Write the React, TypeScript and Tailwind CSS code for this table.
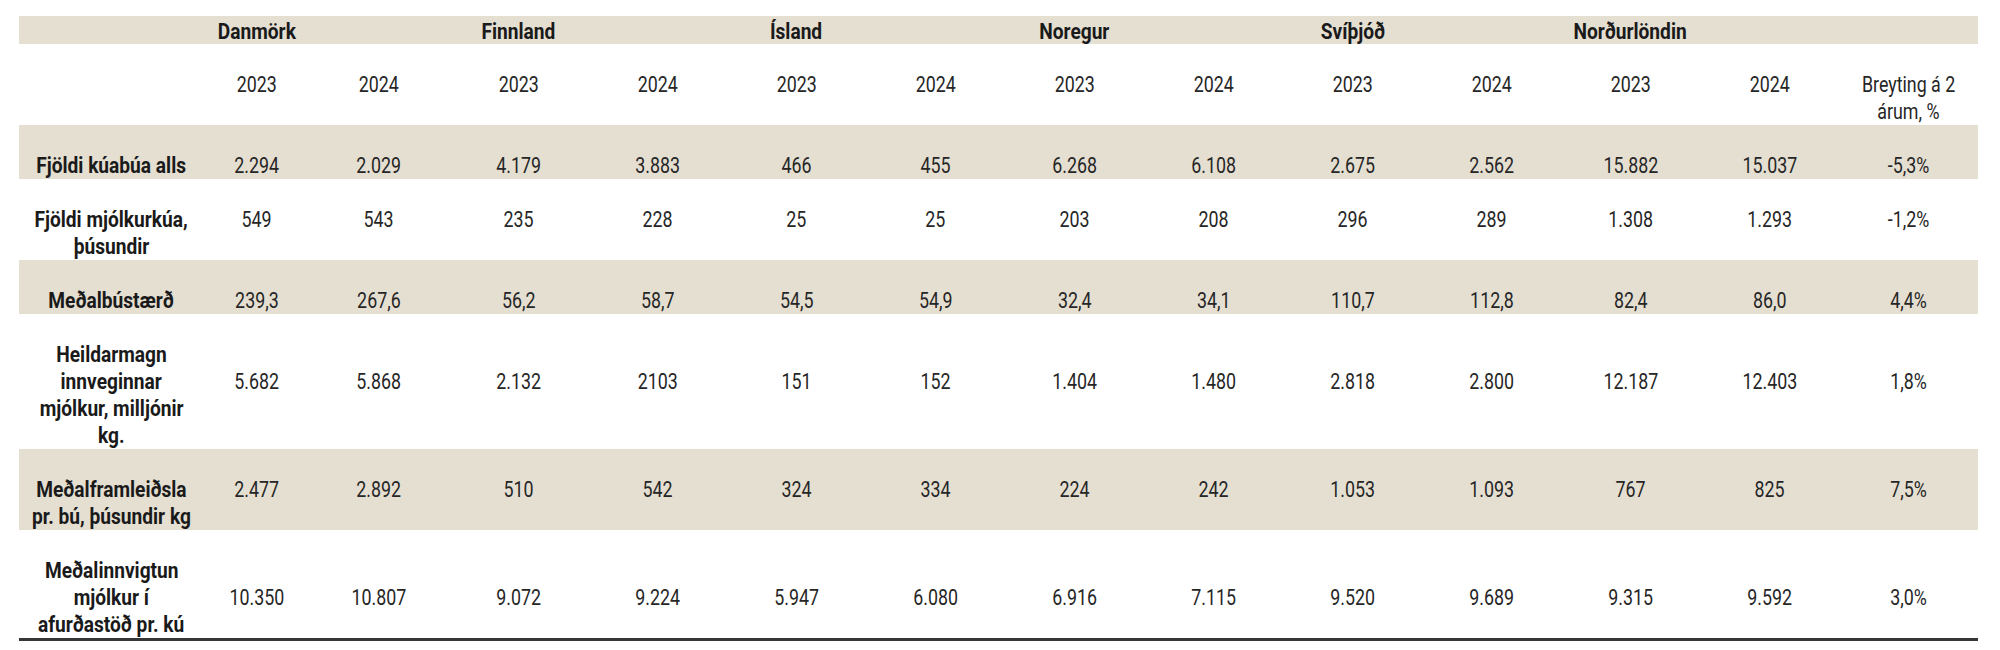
const font = { fontFamily: '"Liberation Sans Narrow", "Roboto", sans-serif' };

const countries = ['Danmörk', 'Finnland', 'Ísland', 'Noregur', 'Svíþjóð', 'Norðurlöndin'];

type Row = {
  label: string[];
  values: string[];
  shaded: boolean;
  deep?: boolean;
};

const rows: Row[] = [
  {
    label: ['Fjöldi kúabúa alls'],
    values: ['2.294', '2.029', '4.179', '3.883', '466', '455', '6.268', '6.108', '2.675', '2.562', '15.882', '15.037', '-5,3%'],
    shaded: true,
  },
  {
    label: ['Fjöldi mjólkurkúa,', 'þúsundir'],
    values: ['549', '543', '235', '228', '25', '25', '203', '208', '296', '289', '1.308', '1.293', '-1,2%'],
    shaded: false,
  },
  {
    label: ['Meðalbústærð'],
    values: ['239,3', '267,6', '56,2', '58,7', '54,5', '54,9', '32,4', '34,1', '110,7', '112,8', '82,4', '86,0', '4,4%'],
    shaded: true,
  },
  {
    label: ['Heildarmagn', 'innveginnar', 'mjólkur, milljónir', 'kg.'],
    values: ['5.682', '5.868', '2.132', '2103', '151', '152', '1.404', '1.480', '2.818', '2.800', '12.187', '12.403', '1,8%'],
    shaded: false,
    deep: true,
  },
  {
    label: ['Meðalframleiðsla', 'pr. bú, þúsundir kg'],
    values: ['2.477', '2.892', '510', '542', '324', '334', '224', '242', '1.053', '1.093', '767', '825', '7,5%'],
    shaded: true,
  },
  {
    label: ['Meðalinnvigtun', 'mjólkur í', 'afurðastöð pr. kú'],
    values: ['10.350', '10.807', '9.072', '9.224', '5.947', '6.080', '6.916', '7.115', '9.520', '9.689', '9.315', '9.592', '3,0%'],
    shaded: false,
    deep: true,
  },
];

const cols = 'grid grid-cols-[185px_105px_140px_repeat(11,139px)]';

// condensed look: the printed table uses a narrow grotesque
function Narrow({ children }: { children: React.ReactNode }) {
  return <span className="inline-block scale-x-[0.81] whitespace-nowrap">{children}</span>;
}

function NarrowBold({ children }: { children: React.ReactNode }) {
  return <span className="inline-block scale-x-[0.87] whitespace-nowrap">{children}</span>;
}

export default function App() {
  return (
    <div className="min-h-[650px] bg-white pl-[19px] pt-[16px] text-[22px] text-[#262626]" style={font}>
      <div className="w-[1959px]">
        {/* Country header */}
        <div className={`${cols} h-[28px] bg-[#e5dfd2] font-bold leading-[25px] text-[#1a1a1a]`}>
          <div />
          {countries.map((c) => (
            <div key={c} className="col-span-2 grid grid-cols-[subgrid]">
              <div className="pt-[3px] text-center">
                <NarrowBold>{c}</NarrowBold>
              </div>
            </div>
          ))}
          <div />
        </div>

        {/* Years */}
        <div className={`${cols} items-start leading-[27px]`}>
          <div />
          {countries.map((c) => (
            <div key={c} className="col-span-2 grid grid-cols-[subgrid] pt-[27px]">
              <div className="text-center">
                <Narrow>2023</Narrow>
              </div>
              <div className="text-center">
                <Narrow>2024</Narrow>
              </div>
            </div>
          ))}
          <div className="pt-[27px] text-center">
            <div>
              <Narrow>Breyting á 2</Narrow>
            </div>
            <div>
              <Narrow>árum, %</Narrow>
            </div>
          </div>
        </div>

        {/* Data */}
        {rows.map((r, i) => (
          <div
            key={i}
            className={`${cols} items-start leading-[27px] ${r.shaded ? 'bg-[#e5dfd2]' : 'bg-white'} ${
              i === rows.length - 1 ? 'border-b-[3px] border-[#363636]' : ''
            }`}
          >
            <div className="pt-[27px] text-center font-bold text-[#1a1a1a]">
              {r.label.map((l) => (
                <div key={l}>
                  <NarrowBold>{l}</NarrowBold>
                </div>
              ))}
            </div>
            {r.values.map((v, j) => (
              <div key={j} className={`text-center ${r.deep ? 'pt-[54px]' : 'pt-[27px]'}`}>
                <Narrow>{v}</Narrow>
              </div>
            ))}
          </div>
        ))}
      </div>
    </div>
  );
}
